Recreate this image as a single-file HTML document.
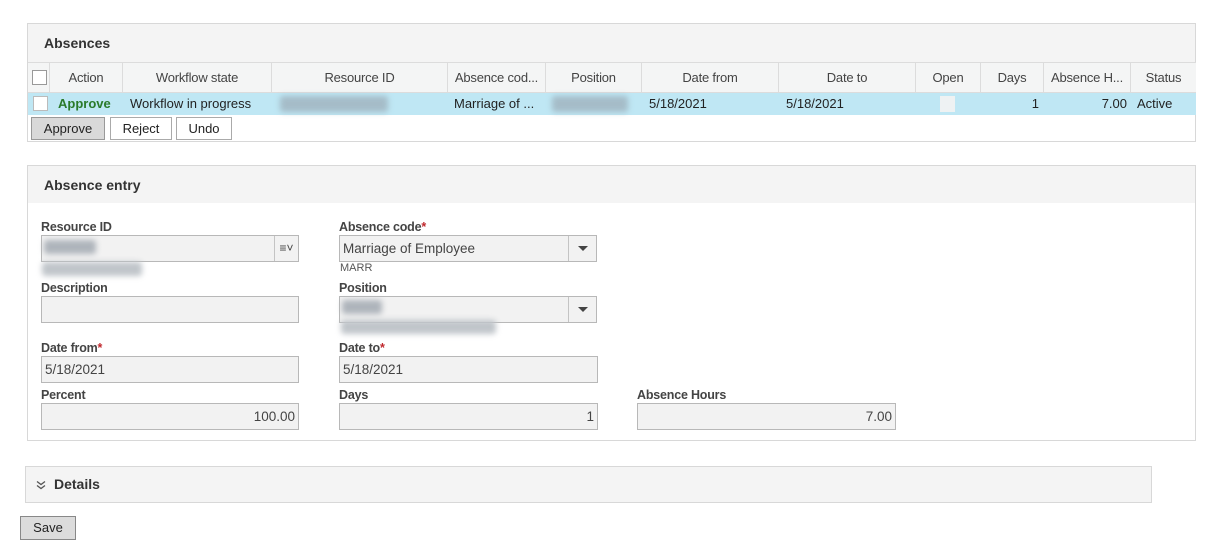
<!DOCTYPE html>
<html><head><style>
*{box-sizing:border-box;margin:0;padding:0}
body{width:1224px;height:556px;background:#fff;font-family:"Liberation Sans",sans-serif;font-size:13px;color:#333;position:relative;overflow:hidden}
.a{position:absolute}
.panel{position:absolute;border:1px solid #d8d8d8;background:#fff}
.ph{position:absolute;left:0;right:0;top:0;background:#f4f4f4;font-weight:bold;font-size:14px;color:#333}
.th{position:absolute;top:38px;height:31px;border-right:1px solid #dcdcdc;border-top:1px solid #dcdcdc;border-bottom:1px solid #dcdcdc;background:#f4f5f5;text-align:center;line-height:29px;color:#444;white-space:nowrap;letter-spacing:-0.2px}
.td{position:absolute;top:69px;height:22px;line-height:22px;white-space:nowrap;color:#222}
.cb{position:absolute;width:15px;height:15px;border:1px solid #999;background:#fff}
.btn{position:absolute;height:23px;border:1px solid #aaa;background:#fff;text-align:center;line-height:21px;color:#222}
.lbl{position:absolute;font-weight:bold;font-size:12.5px;color:#444;letter-spacing:-0.2px}
.inp{position:absolute;height:27px;border:1px solid #b8b8b8;background:#f2f2f2;line-height:25px;padding:0 3px;color:#444;font-size:13.5px}
.blur{position:absolute;background:#aeb4bb;filter:blur(3px);border-radius:3px}
.req{color:#c0282d}
.dd{position:absolute;right:0;top:0;bottom:0;width:28px;border-left:1px solid #c4c4c4}
.tri{position:absolute;left:9px;top:10px;width:0;height:0;border-left:5px solid transparent;border-right:5px solid transparent;border-top:5px solid #444}
</style></head><body>

<div class="panel" style="left:27px;top:23px;width:1169px;height:119px">
 <div class="ph" style="height:38px;padding:11px 0 0 16px">Absences</div>
 <div class="th" style="left:0;width:22px;"><div class="cb" style="left:4px;top:7px"></div></div>
 <div class="th" style="left:22px;width:73px">Action</div>
 <div class="th" style="left:95px;width:149px">Workflow state</div>
 <div class="th" style="left:244px;width:176px">Resource ID</div>
 <div class="th" style="left:420px;width:98px">Absence cod...</div>
 <div class="th" style="left:518px;width:96px">Position</div>
 <div class="th" style="left:614px;width:137px">Date from</div>
 <div class="th" style="left:751px;width:137px">Date to</div>
 <div class="th" style="left:888px;width:65px">Open</div>
 <div class="th" style="left:953px;width:63px">Days</div>
 <div class="th" style="left:1016px;width:87px">Absence H...</div>
 <div class="th" style="left:1103px;width:65px;border-right:none">Status</div>
 <div class="a" style="left:0;top:69px;width:1168px;height:22px;background:#bfe7f4"></div>
 <div class="cb" style="left:5px;top:72px;border-color:#bbb"></div>
 <div class="td" style="left:30px;color:#2a7a2a;font-weight:bold">Approve</div>
 <div class="td" style="left:102px">Workflow in progress</div>
 <div class="blur" style="left:252px;top:72px;width:108px;height:16px;background:#a5bcc8"></div>
 <div class="td" style="left:426px">Marriage of ...</div>
 <div class="blur" style="left:524px;top:72px;width:76px;height:16px;background:#a5bcc8"></div>
 <div class="td" style="left:621px">5/18/2021</div>
 <div class="td" style="left:758px">5/18/2021</div>
 <div class="a" style="left:912px;top:72px;width:15px;height:16px;background:#eef2f3"></div>
 <div class="td" style="left:953px;width:58px;text-align:right">1</div>
 <div class="td" style="left:1016px;width:83px;text-align:right">7.00</div>
 <div class="td" style="left:1109px">Active</div>
 <div class="btn" style="left:3px;top:93px;width:74px;background:#d9d9d9;border-color:#999">Approve</div>
 <div class="btn" style="left:82px;top:93px;width:62px">Reject</div>
 <div class="btn" style="left:148px;top:93px;width:56px">Undo</div>
</div>

<div class="panel" style="left:27px;top:165px;width:1169px;height:276px">
 <div class="ph" style="height:37px;padding:11px 0 0 16px">Absence entry</div>
</div>
<div class="lbl" style="left:41px;top:220px">Resource ID</div>
<div class="inp" style="left:41px;top:235px;width:258px"><div class="dd" style="width:24px;font-size:12px;text-align:center;line-height:25px">≡˅</div></div>
<div class="blur" style="left:44px;top:240px;width:52px;height:14px"></div>
<div class="blur" style="left:42px;top:262px;width:100px;height:14px;background:#c0c5ca"></div>
<div class="lbl" style="left:339px;top:220px">Absence code<span class="req">*</span></div>
<div class="inp" style="left:339px;top:235px;width:258px">Marriage of Employee<div class="dd"><div class="tri"></div></div></div>
<div class="a" style="left:340px;top:262px;font-size:11px;color:#555">MARR</div>
<div class="lbl" style="left:41px;top:281px">Description</div>
<div class="inp" style="left:41px;top:296px;width:258px"></div>
<div class="lbl" style="left:339px;top:281px">Position</div>
<div class="inp" style="left:339px;top:296px;width:258px"><div class="dd"><div class="tri"></div></div></div>
<div class="blur" style="left:342px;top:300px;width:40px;height:14px"></div>
<div class="blur" style="left:341px;top:320px;width:155px;height:14px;background:#c0c5ca"></div>
<div class="lbl" style="left:41px;top:341px">Date from<span class="req">*</span></div>
<div class="inp" style="left:41px;top:356px;width:258px">5/18/2021</div>
<div class="lbl" style="left:339px;top:341px">Date to<span class="req">*</span></div>
<div class="inp" style="left:339px;top:356px;width:259px">5/18/2021</div>
<div class="lbl" style="left:41px;top:388px">Percent</div>
<div class="inp" style="left:41px;top:403px;width:258px;text-align:right">100.00</div>
<div class="lbl" style="left:339px;top:388px">Days</div>
<div class="inp" style="left:339px;top:403px;width:259px;text-align:right">1</div>
<div class="lbl" style="left:637px;top:388px">Absence Hours</div>
<div class="inp" style="left:637px;top:403px;width:259px;text-align:right">7.00</div>

<div class="panel" style="left:25px;top:466px;width:1127px;height:37px;background:#f4f4f4">
 <svg class="a" style="left:10px;top:13px" width="10" height="10" viewBox="0 0 10 10"><path d="M1 1.5L5 4.5L9 1.5M1 5.5L5 8.5L9 5.5" fill="none" stroke="#555" stroke-width="1.3"/></svg>
 <div class="a" style="left:28px;top:9px;font-weight:bold;font-size:14px;color:#333">Details</div>
</div>
<div class="btn" style="left:20px;top:516px;width:56px;height:24px;background:#dcdcdc;border-color:#888">Save</div>
</body></html>
